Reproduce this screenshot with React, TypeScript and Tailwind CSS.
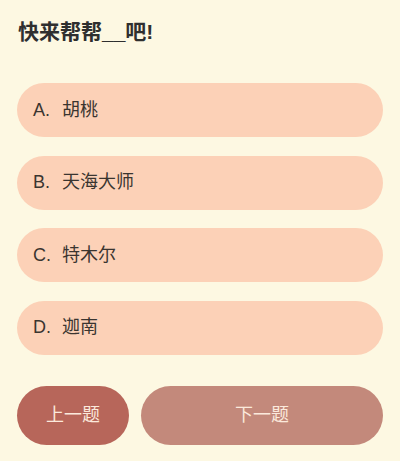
const options = [
  { label: 'A.', text: '胡桃' },
  { label: 'B.', text: '天海大师' },
  { label: 'C.', text: '特木尔' },
  { label: 'D.', text: '迦南' },
];

export default function App() {
  return (
    <div
      className="w-[400px] h-[461px] bg-[#fdf8e2] px-[17px] pt-[18px] text-[#333]"
      style={{ fontFamily: '"Liberation Sans", "Noto Sans CJK SC", sans-serif' }}
    >
      <h1 className="text-[21px] leading-[28px] font-bold pl-[1px] text-[#2f2f2f]">快来帮帮__吧!</h1>

      <div className="mt-[37px] flex flex-col gap-[18.5px]">
        {options.map((o) => (
          <div
            key={o.label}
            className="h-[54px] rounded-full bg-[#fcd1b7] flex items-center pl-[16px] text-[18px] text-[#3a3530]"
          >
            <span className="w-[29px]">{o.label}</span>
            <span>{o.text}</span>
          </div>
        ))}
      </div>

      <div className="mt-[31px] flex gap-[12px]">
        <button className="w-[112px] h-[59px] rounded-full bg-[#b7665a] text-[#fbe9dc] text-[18px]">
          上一题
        </button>
        <button className="flex-1 h-[59px] rounded-full bg-[#c3897b] text-[#fbe9dc] text-[18px]">
          下一题
        </button>
      </div>
    </div>
  );
}
